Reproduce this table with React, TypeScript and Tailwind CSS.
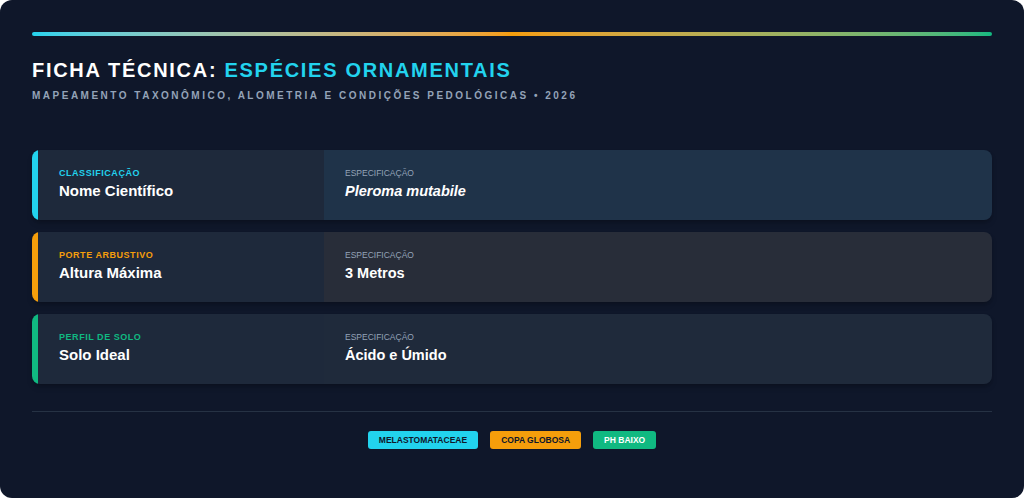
const rows = [
  {
    tag: "Classificação",
    title: "Nome Científico",
    value: "Pleroma mutabile",
    italic: true,
    border: "bg-[#22d3ee]",
    label: "text-[#22d3ee]",
    right: "bg-[#1f3349]",
  },
  {
    tag: "Porte Arbustivo",
    title: "Altura Máxima",
    value: "3 Metros",
    italic: false,
    border: "bg-[#f59e0b]",
    label: "text-[#f59e0b]",
    right: "bg-[#282d39]",
  },
  {
    tag: "Perfil de Solo",
    title: "Solo Ideal",
    value: "Ácido e Úmido",
    italic: false,
    border: "bg-[#10b981]",
    label: "text-[#10b981]",
    right: "bg-[#1f2a3b]",
  },
]

const tags = [
  { text: "MELASTOMATACEAE", cls: "bg-[#22d3ee] text-[#0f172a]" },
  { text: "COPA GLOBOSA", cls: "bg-[#f59e0b] text-[#0f172a]" },
  { text: "PH BAIXO", cls: "bg-[#10b981] text-white" },
]

export default function App() {
  return (
    <div className="w-[1024px] h-[498px] bg-white font-['Liberation_Sans',Arial,sans-serif]">
      <div className="w-full h-full bg-[#0f172a] rounded-[12px] px-8 pt-8 flex flex-col">
        {/* accent bar */}
        <div className="h-1 rounded-full bg-gradient-to-r from-[#22d3ee] via-[#f59e0b] to-[#10b981]"></div>

        <h1 className="mt-[20px] text-[20px] leading-7 font-bold tracking-[0.085em] text-white">
          FICHA TÉCNICA: <span className="text-[#22d3ee]">ESPÉCIES ORNAMENTAIS</span>
        </h1>
        <p className="mt-[6px] text-[10px] leading-3 font-bold tracking-[0.25em] text-[#94a3b8]">
          MAPEAMENTO TAXONÔMICO, ALOMETRIA E CONDIÇÕES PEDOLÓGICAS • 2026
        </p>

        <div className="mt-[48px] flex flex-col gap-3">
          {rows.map((r) => (
            <div key={r.title} className="flex h-[70px] rounded-lg overflow-hidden shadow-md shadow-black/20">
              <div className={`w-[6px] ${r.border}`}></div>
              <div className="w-[286px] bg-[#1e293b] px-[21px] pb-[2px] flex flex-col justify-center">
                <span className={`text-[9px] leading-3 font-bold uppercase tracking-[0.06em] ${r.label}`}>{r.tag}</span>
                <span className="mt-[2px] text-[15px] leading-5 font-bold text-white">{r.title}</span>
              </div>
              <div className={`flex-1 ${r.right} px-[21px] pb-[2px] flex flex-col justify-center`}>
                <span className="text-[8.5px] leading-3 text-[#94a3b8]">ESPECIFICAÇÃO</span>
                <span className={`mt-[2px] text-[14.5px] leading-5 font-bold text-white ${r.italic ? "italic" : ""}`}>{r.value}</span>
              </div>
            </div>
          ))}
        </div>

        <div className="mt-[27px] h-px bg-[#263244]"></div>

        <div className="mt-[19px] flex justify-center gap-3">
          {tags.map((t) => (
            <span key={t.text} className={`h-[18px] px-[11px] rounded-[3px] text-[8.5px] font-bold flex items-center ${t.cls}`}>
              {t.text}
            </span>
          ))}
        </div>
      </div>
    </div>
  )
}
